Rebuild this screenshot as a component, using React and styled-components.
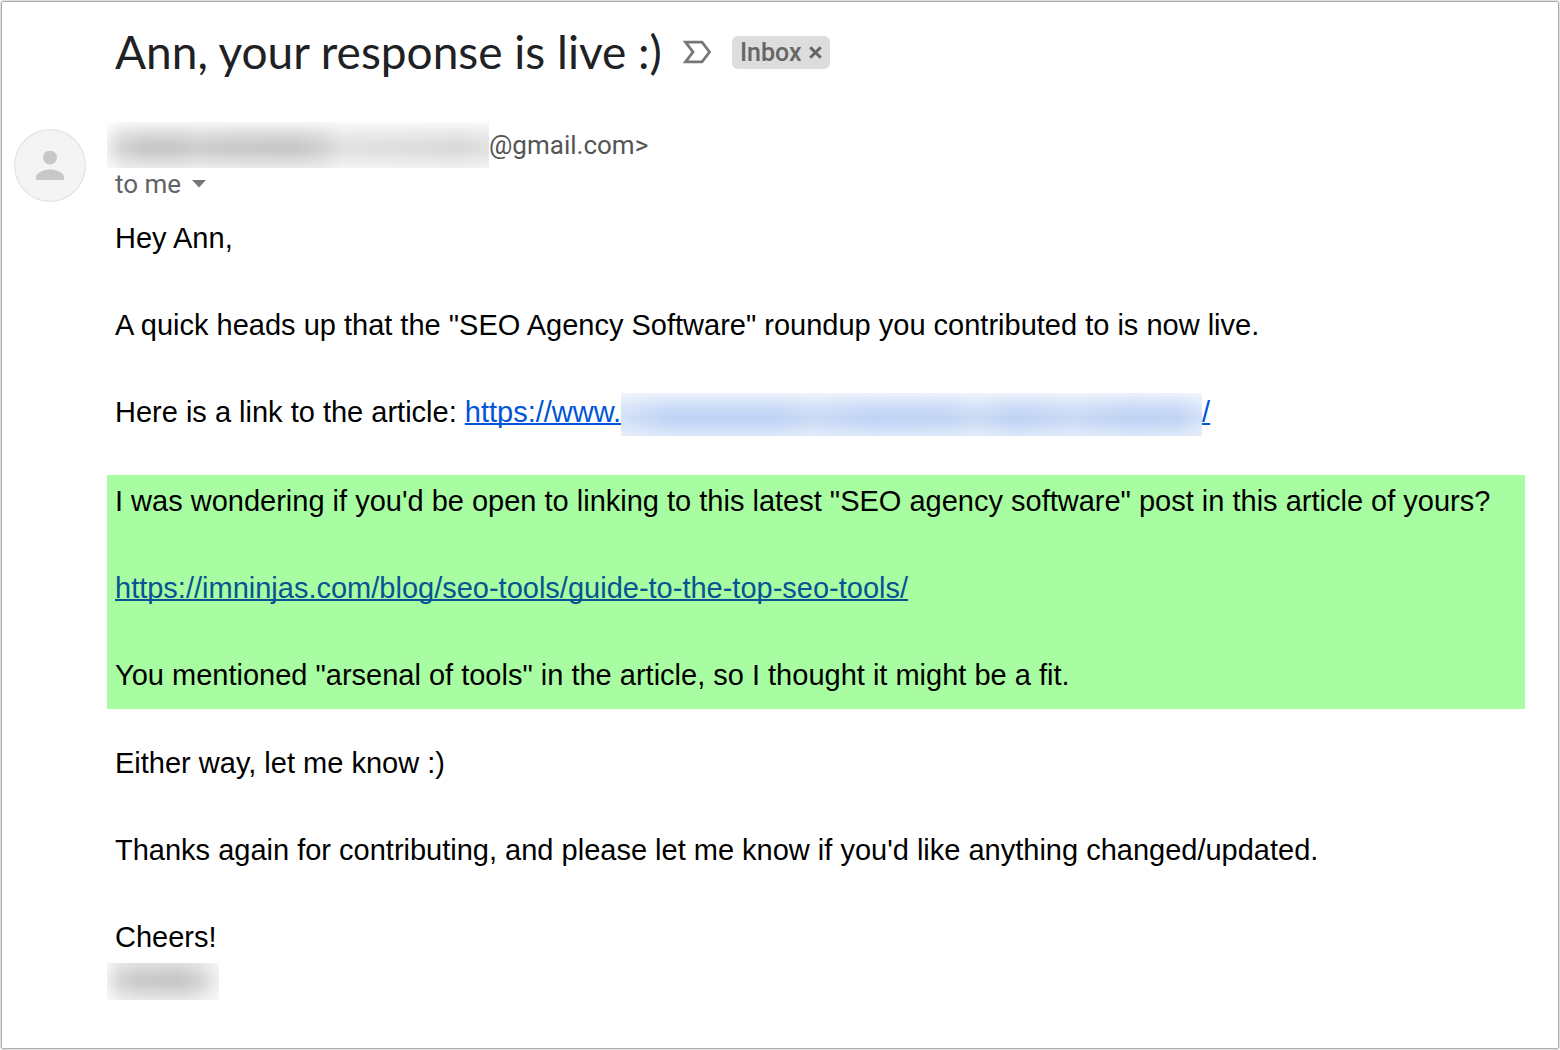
import React from 'react';
import styled, { createGlobalStyle } from 'styled-components';

const GlobalStyle = createGlobalStyle`
    * {
        box-sizing: border-box;
    }

    body {
        margin: 0;
        background-color: #fff;
    }
`;

const Page = styled.main`
    display: grid;
    grid-template-columns: 92px 1fr;
    grid-template-rows: auto 1fr;
    min-height: 100vh;
    padding: 20px 34px 48px 13px;
    border: 1px solid #dedede;
    border-radius: 3px;
    box-shadow: inset 0 0 0 1px #b0b0b0;
    font-family: 'Liberation Sans', Arial, sans-serif;
`;

const Header = styled.header`
    grid-column: 2;
    display: flex;
    align-items: center;
    gap: 20px;
    height: 62px;
    padding-left: 9px;
`;

const Subject = styled.h1`
    margin: 0;
    font-family: Lato, sans-serif;
    font-size: 46px;
    font-weight: 400;
    line-height: 60px;
    color: #202124;
`;

const IconButton = styled.button`
    display: flex;
    padding: 0;
    border: 0;
    background: none;
    cursor: pointer;
`;

const Label = styled.span`
    display: flex;
    align-items: center;
    gap: 8px;
    height: 33px;
    padding: 0 8px;
    border-radius: 6px;
    background-color: #ddd;
    font-family: Roboto, sans-serif;
    font-size: 25px;
    font-weight: 500;
    color: #666;
`;

const Avatar = styled.div`
    grid-column: 1;
    display: flex;
    justify-content: center;
    align-items: center;
    width: 72px;
    height: 73px;
    margin-top: 46px;
    border: 1px solid #e0e0e0;
    border-radius: 50%;
    background-color: #f4f4f4;
`;

const Message = styled.article`
    grid-column: 2;
    padding: 39px 0 0 1px;
`;

const Sender = styled.div`
    display: flex;
    align-items: center;
    height: 46px;
    font-family: Roboto, sans-serif;
    font-size: 26px;
    color: #555;
`;

const Recipient = styled.div`
    display: flex;
    align-items: center;
    gap: 10px;
    height: 32px;
    padding-left: 8px;
    font-family: Roboto, sans-serif;
    font-size: 26px;
    color: #5f6368;
`;

const Redacted = styled.span`
    display: inline-block;
    flex: none;
    width: ${props => props.$width}px;
    height: ${props => props.$height}px;
    vertical-align: middle;
    background: ${props => props.$fill};
`;

const Body = styled.div`
    padding-top: 16px;
    font-size: 29px;
    line-height: 44px;
    color: #000;
`;

const Text = styled.p`
    margin: 0 0 43px;
    padding: 0 8px;
`;

const Highlight = styled.section`
    margin: -4px 0 32px;
    padding: 4px 0 12px;
    background-color: #a8fca1;

    ${Text}:last-child {
        margin-bottom: 0;
    }
`;

const SignOff = styled.div`
    display: grid;
    gap: 4px;

    ${Text} {
        margin-bottom: 0;
    }
`;

const Link = styled.a`
    color: ${props => props.$visited ? '#075394' : '#0055d8'};
    text-decoration: underline;
    text-decoration-thickness: 2px;
    text-decoration-skip-ink: none;
`;

const senderFill = `
    linear-gradient(to bottom, rgba(255, 255, 255, 0.85), rgba(255, 255, 255, 0.35) 25%, rgba(255, 255, 255, 0) 50%, rgba(255, 255, 255, 0) 62%, rgba(255, 255, 255, 0.6)),
    linear-gradient(to right, #efefef, #d4d4d4 4%, #c9c9c9 10%, #c8c8c8 17%, #cfcfcf 24%, #cacaca 35%, #c9c9c9 50%, #d2d2d2 56%, #e2e2e2 62%, #dedede 80%, #dadada 92%, #e2e2e2)
`;

const linkFill = `
    linear-gradient(to bottom, rgba(255, 255, 255, 0.7), rgba(255, 255, 255, 0.25) 28%, rgba(255, 255, 255, 0) 55%, rgba(255, 255, 255, 0) 62%, rgba(255, 255, 255, 0.45)),
    linear-gradient(to right, #d4e1f8, #c0d4f5 8%, #c0d4f5 27%, #cbdbf6 33%, #c0d4f5 43%, #c2d5f5 56%, #ccdcf6 61%, #bfd3f4 68%, #cadaf6 78%, #bfd3f4 88%, #c2d5f5 96%, #d4e1f8)
`;

const signatureFill = `
    linear-gradient(to bottom, rgba(255, 255, 255, 0.4), rgba(255, 255, 255, 0) 40%, rgba(255, 255, 255, 0) 55%, rgba(255, 255, 255, 0.55)),
    linear-gradient(to right, #f0f0f0, #d6d6d6 12%, #cbcbcb 28%, #c8c8c8 65%, #d4d4d4 82%, #f0f0f0)
`;

const App = () => {
    return (
        <>
            <GlobalStyle/>
            <Page>
                <Header>
                    <Subject>Ann, your response is live :)</Subject>
                    <IconButton aria-label="Mark as important">
                        <svg width="30" height="24" viewBox="0 0 30 24" fill="none">
                            <path d="M3.5 2.2H20L27.5 12L20 21.8H3.5L11 12Z" stroke="#777" strokeWidth="2.8"/>
                        </svg>
                    </IconButton>
                    <Label>
                        Inbox
                        <IconButton aria-label="Remove label Inbox">
                            <svg width="13" height="13" viewBox="0 0 13 13">
                                <path d="M1.2 1.2L11.8 11.8M11.8 1.2L1.2 11.8" stroke="#666" strokeWidth="3"/>
                            </svg>
                        </IconButton>
                    </Label>
                </Header>
                <Avatar>
                    <svg width="28" height="30" viewBox="0 0 28 30" fill="#c8c8c8">
                        <circle cx="14" cy="6.5" r="7"/>
                        <path d="M0 29V26C0 21 9 18.5 14 18.5S28 21 28 26V29Z"/>
                    </svg>
                </Avatar>
                <Message>
                    <Sender>
                        <Redacted $width={382} $height={46} $fill={senderFill}/>
                        @gmail.com&gt;
                    </Sender>
                    <Recipient>
                        to me
                        <IconButton aria-label="Show details">
                            <svg width="16" height="8" viewBox="0 0 16 8">
                                <path d="M1 0H15L8 7.5Z" fill="#757575"/>
                            </svg>
                        </IconButton>
                    </Recipient>
                    <Body>
                        <Text>Hey Ann,</Text>
                        <Text>A quick heads up that the "SEO Agency Software" roundup you contributed to is now live.</Text>
                        <Text>
                            Here is a link to the article:{' '}
                            <Link href="#article">https://www.<Redacted $width={581} $height={43} $fill={linkFill}/>/</Link>
                        </Text>
                        <Highlight>
                            <Text>I was wondering if you'd be open to linking to this latest "SEO agency software" post in this article of yours?</Text>
                            <Text>
                                <Link $visited href="https://imninjas.com/blog/seo-tools/guide-to-the-top-seo-tools/">
                                    https://imninjas.com/blog/seo-tools/guide-to-the-top-seo-tools/
                                </Link>
                            </Text>
                            <Text>You mentioned "arsenal of tools" in the article, so I thought it might be a fit.</Text>
                        </Highlight>
                        <Text>Either way, let me know :)</Text>
                        <Text>Thanks again for contributing, and please let me know if you'd like anything changed/updated.</Text>
                        <SignOff>
                            <Text>Cheers!</Text>
                            <Redacted $width={112} $height={37} $fill={signatureFill}/>
                        </SignOff>
                    </Body>
                </Message>
            </Page>
        </>
    )
}

export default App;
